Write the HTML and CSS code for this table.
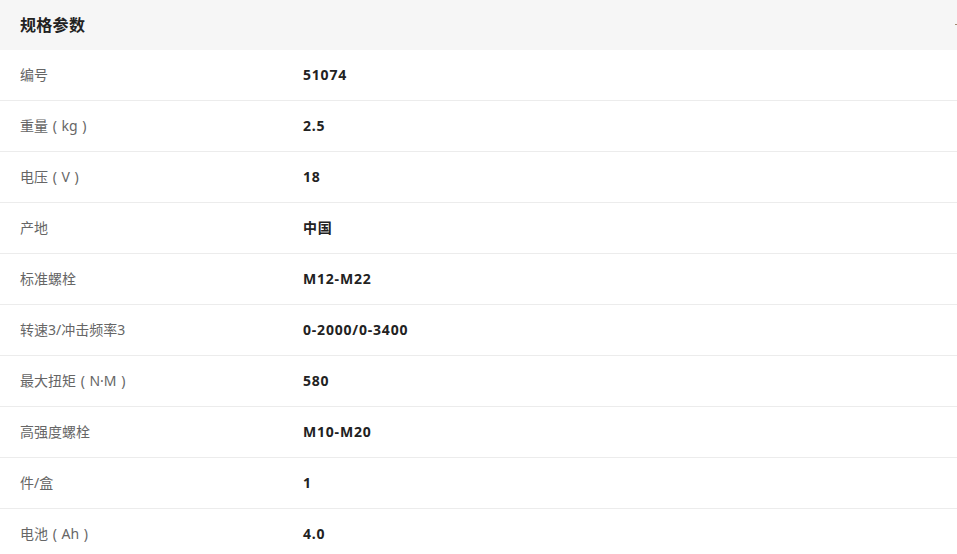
FILE: index.html
```html
<!DOCTYPE html>
<html lang="zh-CN">
<head>
<meta charset="utf-8">
<title>规格参数</title>
<link rel="stylesheet" href="styles.css">
</head>
<body>
<section class="spec">
  <header class="spec-head">
    <h2 class="spec-title">规格参数</h2>
    <span class="spec-mark"></span>
  </header>
  <div class="spec-list">
    <div class="spec-row"><div class="spec-label">编号</div><div class="spec-value">51074</div></div>
    <div class="spec-row"><div class="spec-label">重量 ( kg )</div><div class="spec-value">2.5</div></div>
    <div class="spec-row"><div class="spec-label">电压 ( V )</div><div class="spec-value">18</div></div>
    <div class="spec-row"><div class="spec-label">产地</div><div class="spec-value">中国</div></div>
    <div class="spec-row"><div class="spec-label">标准螺栓</div><div class="spec-value">M12-M22</div></div>
    <div class="spec-row"><div class="spec-label">转速3/冲击频率3</div><div class="spec-value">0-2000/0-3400</div></div>
    <div class="spec-row"><div class="spec-label">最大扭矩 ( N·M )</div><div class="spec-value">580</div></div>
    <div class="spec-row"><div class="spec-label">高强度螺栓</div><div class="spec-value">M10-M20</div></div>
    <div class="spec-row"><div class="spec-label">件/盒</div><div class="spec-value">1</div></div>
    <div class="spec-row"><div class="spec-label">电池 ( Ah )</div><div class="spec-value">4.0</div></div>
  </div>
</section>
</body>
</html>
```
FILE: styles.css
```css
html, body {
  margin: 0;
  padding: 0;
  background: #fff;
}
body {
  font-family: "Noto Sans", "Noto Sans CJK SC", sans-serif;
  color: #333;
  overflow: hidden;
}
.spec-head {
  height: 50px;
  background: #f6f6f6;
  display: flex;
  align-items: center;
  justify-content: space-between;
  padding: 0 0 2px 20px;
  box-sizing: border-box;
}
.spec-title {
  margin: 0;
  font-size: 16px;
  font-weight: 700;
  color: #222;
  letter-spacing: 0.3px;
}
.spec-mark {
  width: 2px;
  height: 1px;
  background: #a08a70;
}
.spec-row {
  display: flex;
  align-items: center;
  padding: 0 0 2px 20px;
  height: 48px;
  border-bottom: 1px solid #ececec;
  font-size: 14px;
}
.spec-label {
  width: 283px;
  color: #666;
  flex: none;
  word-spacing: 1px;
}
.spec-value {
  font-weight: 700;
  color: #222;
  letter-spacing: 0.8px;
}
```
